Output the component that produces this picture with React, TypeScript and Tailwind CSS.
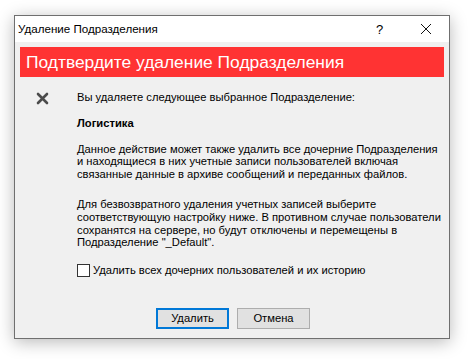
export default function App() {
  const font = { fontFamily: '"Liberation Sans", Arial, sans-serif' }

  return (
    <div className="w-[469px] h-[359px] bg-white pl-[14px] pt-[15px]" style={font}>
      <div className="w-[436px] h-[324px] border border-[#6f6f6f] bg-[#f0f0f0] flex flex-col shadow-[0_3px_16px_rgba(0,0,0,0.28)] text-[11.2px] text-black">
        {/* title bar */}
        <div className="h-[26px] bg-white flex items-center pl-[3px] shrink-0">
          <span className="flex-1 text-[11.6px] leading-none">Удаление Подразделения</span>
          <span className="w-[10px] text-[13px] leading-none mr-[34px]">?</span>
          <svg width="12" height="12" viewBox="0 0 12 12" className="mr-[17px]">
            <path d="M1 1 L11 11 M11 1 L1 11" stroke="#111" strokeWidth="1" />
          </svg>
        </div>

        {/* red header */}
        <div className="mx-[5px] mt-[5px] h-[30px] bg-[#ff3333] text-white text-[17.4px] flex items-center pl-[6px] shrink-0 whitespace-nowrap">
          Подтвердите удаление Подразделения
        </div>

        {/* content */}
        <div className="flex mt-[14px] flex-1">
          <div className="w-[62px] shrink-0 pl-[21px] pt-[1px]">
            <svg width="13" height="13" viewBox="0 0 13 13">
              <path d="M2 2 L11 11 M11 2 L2 11" stroke="#4b4b4b" strokeWidth="2.6" strokeLinecap="round" />
            </svg>
          </div>
          <div className="flex flex-col leading-[12.8px] whitespace-nowrap">
            <p>Вы удаляете следующее выбранное Подразделение:</p>
            <p className="font-bold mt-[13px]">Логистика</p>
            <p className="mt-[13px]">
              Данное действие может также удалить все дочерние Подразделения
              <br />и находящиеся в них учетные записи пользователей включая
              <br />связанные данные в архиве сообщений и переданных файлов.
            </p>
            <p className="mt-[17px]">
              Для безвозвратного удаления учетных записей выберите
              <br />соответствующую настройку ниже. В противном случае пользователи
              <br />сохранятся на сервере, но будут отключены и перемещены в
              <br />Подразделение "_Default".
            </p>
            <label className="flex items-center gap-[3px] mt-[15px]">
              <span className="w-[13px] h-[13px] border border-[#333] bg-white shrink-0" />
              <span>Удалить всех дочерних пользователей и их историю</span>
            </label>
          </div>
        </div>

        {/* buttons */}
        <div className="flex gap-[8px] pl-[141px] pb-[9px] shrink-0">
          <button className="w-[73px] h-[21px] border-2 border-[#0078d7] bg-[#e1e1e1] leading-none">
            Удалить
          </button>
          <button className="w-[73px] h-[21px] border border-[#adadad] bg-[#e1e1e1] leading-none">
            Отмена
          </button>
        </div>
      </div>
    </div>
  )
}
